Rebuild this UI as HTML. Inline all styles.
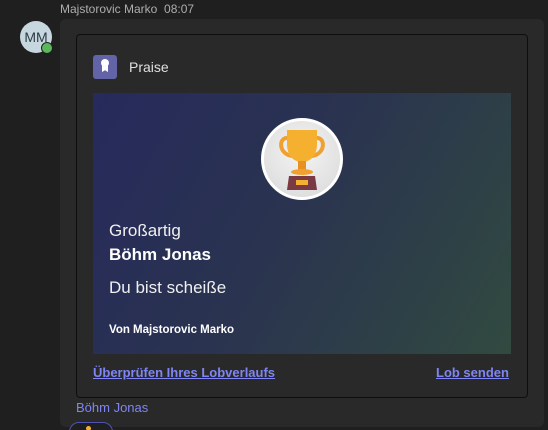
<!DOCTYPE html>
<html style="overflow:hidden;height:430px"><head><meta charset="utf-8"><style>
body{margin:0;width:548px;height:430px;background:#1f1f1f;font-family:"Segoe UI","Liberation Sans",sans-serif;overflow:hidden;position:relative;color:#fff}
.abs{position:absolute}
</style></head><body>
<div class="abs" style="left:60px;top:2px;font-size:12px;color:#adadad">Majstorovic Marko&nbsp;&nbsp;08:07</div>
<div class="abs" style="left:20px;top:21px;width:32px;height:32px;border-radius:50%;background:#c7d7df;color:#2c3a44;font-size:14px;line-height:32px;text-align:center">MM</div>
<div class="abs" style="left:41px;top:42px;width:10px;height:10px;border-radius:50%;background:#5bb75b;border:1px solid #1f1f1f"></div>
<div class="abs" style="left:60px;top:19px;width:484px;height:408px;background:#292929;border-radius:6px"></div>
<div class="abs" style="left:76px;top:34px;width:450px;height:362px;border:1px solid #0e0e0e;border-radius:4px;background:#292929"></div>
<div class="abs" style="left:93px;top:55px;width:24px;height:24px;border-radius:3px;background:#6264a7"></div>
<div class="abs" style="left:101px;top:59px;width:8px;height:8px;border-radius:50%;background:#fff"></div>
<div class="abs" style="left:102px;top:66px;width:6px;height:6px;background:#fff;clip-path:polygon(0 0,100% 0,100% 100%,50% 70%,0 100%)"></div>
<div class="abs" style="left:129px;top:59px;font-size:14px;color:#e0e0e0">Praise</div>
<div class="abs" style="left:93px;top:93px;width:418px;height:261px;background:linear-gradient(120deg,#262a5c 0%,#2a3350 45%,#314a40 100%)"></div>
<div class="abs" style="left:261px;top:118px;width:76px;height:76px;border-radius:50%;background:radial-gradient(circle at 50% 40%,#f4f4f4,#d8d8d8);border:3px solid #fff"></div>
<svg class="abs" style="left:272px;top:126px" width="60" height="66" viewBox="0 0 60 66">
<path d="M17 12 C6 10 6 28 20 30" fill="none" stroke="#f0a030" stroke-width="4"/>
<path d="M43 12 C54 10 54 28 40 30" fill="none" stroke="#f0a030" stroke-width="4"/>
<path d="M15 4 H45 V18 C45 30 38 36 30 36 C22 36 15 30 15 18 Z" fill="#f6b030"/>
<rect x="26" y="35" width="8" height="10" fill="#e89020"/>
<ellipse cx="30" cy="46" rx="11" ry="3" fill="#f0a030"/>
<path d="M17 50 H43 L45 64 H15 Z" fill="#7a3a44"/>
<rect x="24" y="54" width="12" height="5" fill="#f6b030"/>
</svg>
<div class="abs" style="left:109px;top:221px;font-size:17px;color:#f0f0f0">Großartig</div>
<div class="abs" style="left:109px;top:245px;font-size:17px;font-weight:bold;color:#fff">Böhm Jonas</div>
<div class="abs" style="left:109px;top:278px;font-size:17px;color:#f0f0f0">Du bist scheiße</div>
<div class="abs" style="left:109px;top:324px;font-size:11.5px;font-weight:bold;color:#fff">Von Majstorovic Marko</div>
<div class="abs" style="left:93px;top:365px;font-size:13px;font-weight:bold;color:#7f85f5;text-decoration:underline">Überprüfen Ihres Lobverlaufs</div>
<div class="abs" style="left:436px;top:365px;font-size:13px;font-weight:bold;color:#7f85f5;text-decoration:underline">Lob senden</div>
<div class="abs" style="left:76px;top:400px;font-size:13px;color:#7f85f5">Böhm Jonas</div>
<div class="abs" style="left:69px;top:422px;width:42px;height:20px;border:1px solid #4f52b2;border-radius:10px;background:#1f1f1f"></div>
<div class="abs" style="left:86px;top:426px;width:5px;height:5px;border-radius:50%;background:#f6b030"></div>
</body></html>
